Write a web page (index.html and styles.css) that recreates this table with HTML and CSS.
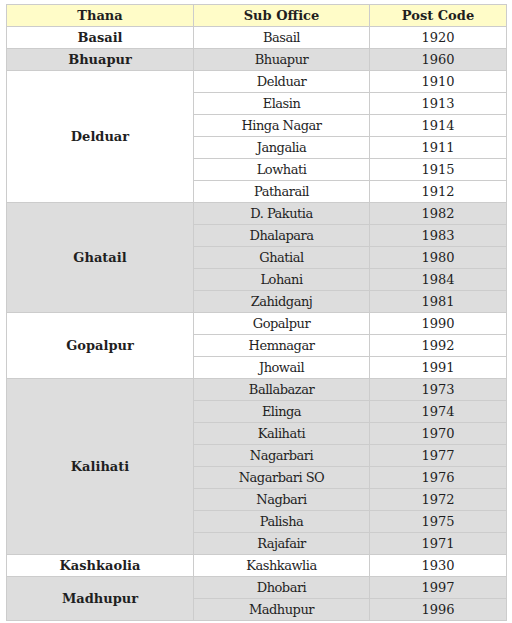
FILE: index.html
```html
<!DOCTYPE html>
<html>
<head>
<meta charset="utf-8">
<link rel="stylesheet" href="styles.css">
</head>
<body>
<table class="post-table">
  <colgroup>
    <col class="c-thana">
    <col class="c-office">
    <col class="c-code">
  </colgroup>
  <thead>
    <tr><th>Thana</th><th>Sub Office</th><th>Post Code</th></tr>
  </thead>
  <tbody>
    <tr class="w"><td class="thana">Basail</td><td class="office">Basail</td><td>1920</td></tr>
    <tr class="g"><td class="thana">Bhuapur</td><td class="office">Bhuapur</td><td>1960</td></tr>
    <tr class="w"><td class="thana" rowspan="6">Delduar</td><td class="office">Delduar</td><td>1910</td></tr>
    <tr class="w"><td class="office">Elasin</td><td>1913</td></tr>
    <tr class="w"><td class="office">Hinga Nagar</td><td>1914</td></tr>
    <tr class="w"><td class="office">Jangalia</td><td>1911</td></tr>
    <tr class="w"><td class="office">Lowhati</td><td>1915</td></tr>
    <tr class="w"><td class="office">Patharail</td><td>1912</td></tr>
    <tr class="g"><td class="thana" rowspan="5">Ghatail</td><td class="office">D. Pakutia</td><td>1982</td></tr>
    <tr class="g"><td class="office">Dhalapara</td><td>1983</td></tr>
    <tr class="g"><td class="office">Ghatial</td><td>1980</td></tr>
    <tr class="g"><td class="office">Lohani</td><td>1984</td></tr>
    <tr class="g"><td class="office">Zahidganj</td><td>1981</td></tr>
    <tr class="w"><td class="thana" rowspan="3">Gopalpur</td><td class="office">Gopalpur</td><td>1990</td></tr>
    <tr class="w"><td class="office">Hemnagar</td><td>1992</td></tr>
    <tr class="w"><td class="office">Jhowail</td><td>1991</td></tr>
    <tr class="g"><td class="thana" rowspan="8">Kalihati</td><td class="office">Ballabazar</td><td>1973</td></tr>
    <tr class="g"><td class="office">Elinga</td><td>1974</td></tr>
    <tr class="g"><td class="office">Kalihati</td><td>1970</td></tr>
    <tr class="g"><td class="office">Nagarbari</td><td>1977</td></tr>
    <tr class="g"><td class="office">Nagarbari SO</td><td>1976</td></tr>
    <tr class="g"><td class="office">Nagbari</td><td>1972</td></tr>
    <tr class="g"><td class="office">Palisha</td><td>1975</td></tr>
    <tr class="g"><td class="office">Rajafair</td><td>1971</td></tr>
    <tr class="w"><td class="thana">Kashkaolia</td><td class="office">Kashkawlia</td><td>1930</td></tr>
    <tr class="g"><td class="thana" rowspan="2">Madhupur</td><td class="office">Dhobari</td><td>1997</td></tr>
    <tr class="g"><td class="office">Madhupur</td><td>1996</td></tr>
  </tbody>
</table>
</body>
</html>
```

FILE: styles.css
```css
html, body {
  margin: 0;
  padding: 0;
  background: #ffffff;
}
body {
  padding: 4px 0 0 6px;
  font-family: "DejaVu Serif", "Liberation Serif", serif;
  font-size: 13px;
  color: #1f1f1f;
}
.post-table {
  border-collapse: collapse;
  width: 500px;
  table-layout: fixed;
}
.c-thana { width: 187px; }
.c-office { width: 176px; }
.c-code { width: 137px; }
.post-table th,
.post-table td {
  border: 1px solid #cccccc;
  height: 21px;
  padding: 0;
  text-align: center;
  vertical-align: middle;
  line-height: 21px;
}
.post-table th {
  background: #fffcc8;
  font-weight: bold;
}
.post-table .thana {
  font-weight: bold;
}
.post-table .office {
  letter-spacing: -0.5px;
}
.post-table tr.g td {
  background: #dddddd;
}
.post-table tr.w td {
  background: #ffffff;
}
```
